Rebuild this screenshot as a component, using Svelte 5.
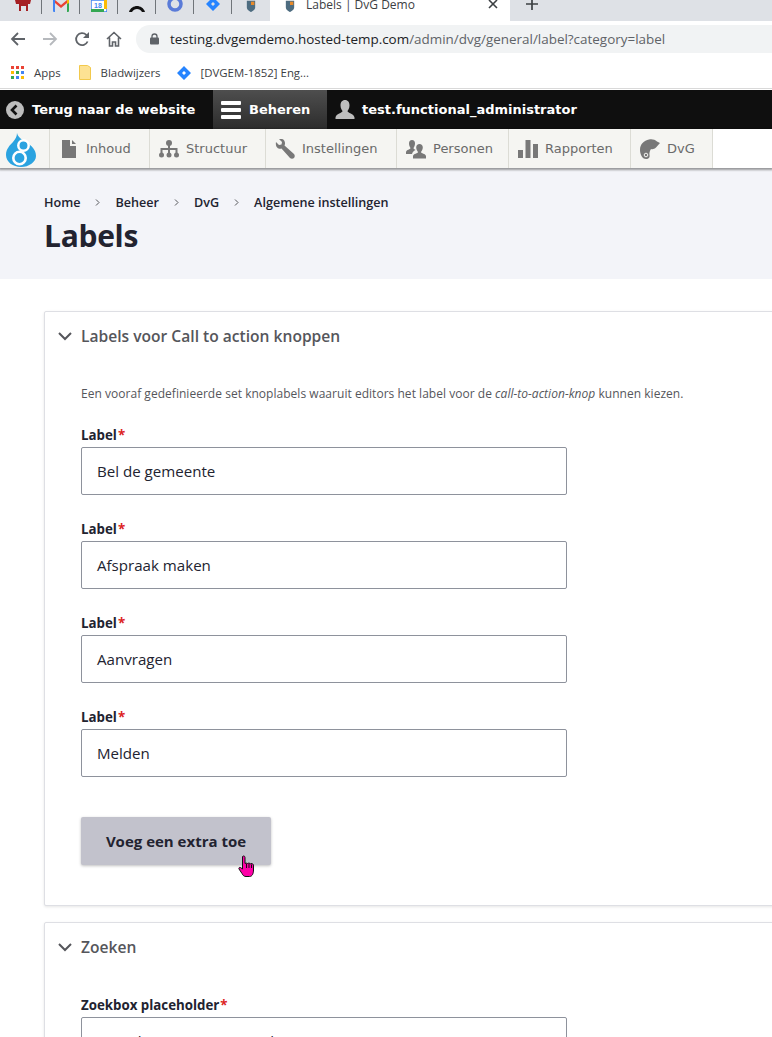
<script>
	const pinned = ['red', 'gmail', 'cal', 'arch', 'ring', 'jira', 'shield'];
	const menu = [
		{ id: 'doc', label: 'Inhoud', width: 100 },
		{ id: 'tree', label: 'Structuur', width: 116 },
		{ id: 'wrench', label: 'Instellingen', width: 131 },
		{ id: 'people', label: 'Personen', width: 112 },
		{ id: 'bars', label: 'Rapporten', width: 122 },
		{ id: 'cham', label: 'DvG', width: 82 }
	];
	const crumbs = ['Home', 'Beheer', 'DvG', 'Algemene instellingen'];
	const labels = ['Bel de gemeente', 'Afspraak maken', 'Aanvragen', 'Melden'];
</script>

{#snippet shield(size)}
	<svg width={size} height={size * 1.25} viewBox="0 0 12 15">
		<path d="M1 1h10v8c0 3-3 4-5 5.500C4 13 1 12 1 9z" fill="#4d6c80" />
		<path d="M6 2h4v4H6z" fill="#e88a2a" />
	</svg>
{/snippet}

<div class="page">
	<div class="tabstrip">
		<div class="pinned">
			{#each pinned as icon}
				<div class="pin">
					{#if icon === 'red'}
						<svg width="16" height="12" viewBox="0 0 16 12"><path d="M0 0h16l-1 4-2 0v7h-2V6H6v5H4V4L1 4z" fill="#a51e22" /></svg>
					{:else if icon === 'gmail'}
						<svg width="16" height="12" viewBox="0 0 16 12">
							<path d="M0 0h2v12H1a1 1 0 0 1-1-1z" fill="#4285f4" />
							<path d="M14 0h2v11a1 1 0 0 1-1 1h-1z" fill="#34a853" />
							<path d="M2 0l6 5 6-5v3L8 8 2 3z" fill="#ea4335" />
							<path d="M14 0h2v3l-2 1z" fill="#fbbc04" />
						</svg>
					{:else if icon === 'cal'}
						<svg width="16" height="12" viewBox="0 0 16 12">
							<rect x="0" y="0" width="16" height="12" fill="#fff" stroke="#4285f4" stroke-width="1.500" />
							<rect x="0" y="9" width="13" height="3" fill="#34a853" />
							<rect x="13" y="0" width="3" height="9" fill="#fbbc04" />
							<text x="7" y="8" class="cal-num">18</text>
						</svg>
					{:else if icon === 'arch'}
						<svg class="down" width="18" height="10" viewBox="0 0 18 10"><path d="M1 9c1-4 5-6 8-6s7 2 8 6l-3 0C13 7 11 6 9 6S5 7 4 9z" fill="#111" /></svg>
					{:else if icon === 'ring'}
						<svg width="16" height="13" viewBox="0 0 16 13"><circle cx="8" cy="4" r="6" fill="none" stroke="#5a7bd8" stroke-width="3.500" /></svg>
					{:else if icon === 'jira'}
						<svg width="16" height="12" viewBox="0 0 16 12"><path d="M8-3l7 7-7 7-7-7zM8 2L6 4l2 2 2-2z" fill="#2684ff" fill-rule="evenodd" /></svg>
					{:else}
						{@render shield(10)}
					{/if}
				</div>
			{/each}
		</div>
		<div class="tab">
			{@render shield(10)}
			<span class="tab-title">Labels | DvG Demo</span>
			<svg class="tab-close" width="10" height="10" viewBox="0 0 10 10"><path d="M1 1l8 8M9 1l-8 8" stroke="#3c4043" stroke-width="1.600" /></svg>
		</div>
		<svg class="new-tab" width="12" height="12" viewBox="0 0 12 12"><path d="M6 0v12M0 6h12" stroke="#3c4043" stroke-width="1.700" /></svg>
	</div>

	<div class="addressbar">
		<svg width="16" height="16" viewBox="0 0 16 16"><path d="M15 8H2M8 2L2 8l6 6" fill="none" stroke="#5f6368" stroke-width="1.800" /></svg>
		<svg width="16" height="16" viewBox="0 0 16 16"><path d="M1 8h13M8 2l6 6-6 6" fill="none" stroke="#b6b9bd" stroke-width="1.800" /></svg>
		<svg width="16" height="16" viewBox="0 0 16 16"><path d="M13.600 10.500A6 6 0 1 1 12.300 3.800L14.500 6" fill="none" stroke="#5f6368" stroke-width="1.800" /><path d="M15 1v6H9z" fill="#5f6368" /></svg>
		<svg width="16" height="16" viewBox="0 0 16 16"><path d="M1 8l7-6.500L15 8M3.500 6.500V15h3v-4h3v4h3V6.500" fill="none" stroke="#5f6368" stroke-width="1.600" /></svg>
		<div class="omnibox">
			<svg width="9" height="12" viewBox="0 0 9 12"><path d="M2 5V3.500a2.500 2.500 0 0 1 5 0V5" fill="none" stroke="#5f6368" stroke-width="1.300" /><rect y="4.500" width="9" height="7" rx="1" fill="#5f6368" /></svg>
			<span class="url"><b>testing.dvgemdemo.hosted-temp.com</b>/admin/dvg/general/label?category=label</span>
		</div>
	</div>

	<div class="bookmarks">
		<div class="bookmark apps">
			<svg width="13" height="13" viewBox="0 0 13 13">
				{#each [0, 5, 10] as y, row}
					{#each [0, 5, 10] as x, col}
						<rect {x} {y} width="3" height="3" fill={[['#ea4335', '#ea4335', '#ea4335'], ['#fbbc04', '#34a853', '#4285f4'], ['#34a853', '#4285f4', '#fbbc04']][row][col]} />
					{/each}
				{/each}
			</svg>
			<span>Apps</span>
		</div>
		<div class="bookmark folder">
			<svg width="12" height="15" viewBox="0 0 12 15"><path d="M.5.500h8l3 2v12H.500z" fill="#fde293" stroke="#f2c94c" /></svg>
			<span>Bladwijzers</span>
		</div>
		<div class="bookmark jira">
			<svg width="14" height="14" viewBox="0 0 14 14"><path d="M7 0l7 7-7 7-7-7zM7 5L5 7l2 2 2-2z" fill="#2684ff" fill-rule="evenodd" /></svg>
			<span>[DVGEM-1852] Eng...</span>
		</div>
	</div>

	<div class="toolbar">
		<div class="bar-item back">
			<svg width="18" height="18" viewBox="0 0 18 18"><circle cx="9" cy="9" r="9" fill="#bdbdbd" /><path d="M10.500 4.500L6 9l4.500 4.500" fill="none" stroke="#111" stroke-width="2.600" /></svg>
			<span>Terug naar de website</span>
		</div>
		<div class="bar-item manage">
			<svg width="20" height="18" viewBox="0 0 20 18"><g fill="#fff"><rect width="20" height="4" rx="1" /><rect y="7" width="20" height="4" rx="1" /><rect y="14" width="20" height="4" rx="1" /></g></svg>
			<span>Beheren</span>
		</div>
		<div class="bar-item user">
			<svg width="20" height="20" viewBox="0 0 20 20"><path d="M10 0c3 0 4.500 2.300 4.500 5.500S13 10 12.500 11c0 2 6.500 2.500 7 6.500V19H.5v-1.500C1 13.500 7.500 13 7.500 11 7 10 5.500 8.700 5.500 5.500S7 0 10 0z" fill="#bdbdbd" /></svg>
			<span>test.functional_administrator</span>
		</div>
	</div>

	<div class="tray">
		<div class="logo">
			<svg width="30" height="34" viewBox="0 0 30 34">
				<path d="M11 0c1 4 4 6 9 9 6 4 10 8 10 14 0 6-7 11-15 11S0 29 0 22c0-6 4-10 7-13 2-3 4-5 4-9z" fill="#2ba3e0" />
				<circle cx="17.500" cy="12.500" r="5.200" fill="none" stroke="#fff" stroke-width="2.500" />
				<circle cx="13.500" cy="25" r="6.200" fill="#2ba3e0" stroke="#fff" stroke-width="2.600" />
			</svg>
		</div>
		{#each menu as item}
			<div class="tray-item" style="width: {item.width}px">
				<div class="slot">
					{#if item.id === 'doc'}
						<svg width="14" height="18" viewBox="0 0 14 18"><path d="M0 0h8v6h6v12H0zM10 0l4 4h-4z" fill="#787878" /></svg>
					{:else if item.id === 'tree'}
						<svg width="20" height="18" viewBox="0 0 20 18"><g fill="#787878"><circle cx="10" cy="3" r="3" /><circle cx="2.500" cy="15" r="2.500" /><circle cx="10" cy="15" r="2.500" /><circle cx="17.500" cy="15" r="2.500" /></g><path d="M10 3v12M2.500 15V9h15v6" fill="none" stroke="#787878" stroke-width="2" /></svg>
					{:else if item.id === 'wrench'}
						<svg width="20" height="20" viewBox="0 0 20 20"><path d="M1 3l3 3 2.500-.5L7 3 4 0c3-1 6 1 6 4 0 1 0 1.500-.5 2.500L19 15c1 1 1 3 0 4s-3 1-4 0L6.500 9.500C4 10.500 0 8.500 1 3z" fill="#787878" /></svg>
					{:else if item.id === 'people'}
						<svg width="20" height="20" viewBox="0 0 20 20"><g fill="#787878"><path d="M6 1c2 0 3 1.500 3 3.500S8 8 7.500 9c0 1 1.500 1.500 2 2-2 1-3 2-3.500 4H0v-2c.5-2.500 4.500-2.500 4.500-4C4 8 3 6.500 3 4.500S4 1 6 1z" /><path d="M13.500 5c2 0 3.300 1.500 3.300 3.500s-1.300 3.500-1.800 4.500c0 1.500 4.500 1.500 5 4v2.500H7V17c.5-2.500 5-2.500 5-4-.5-1-1.800-2.500-1.800-4.500S11.500 5 13.500 5z" /></g></svg>
					{:else if item.id === 'bars'}
						<svg width="20" height="18" viewBox="0 0 20 18"><g fill="#787878"><rect y="10" width="5" height="8" /><rect x="7.500" width="5" height="18" /><rect x="15" y="4" width="5" height="14" /></g></svg>
					{:else}
						<svg width="20" height="20" viewBox="0 0 20 20"><path d="M20 4l-3-1.500C15 .5 12 0 9 .5 4 1.500 0 5 0 11c0 4 2 9 6 9 3 0 4-2 3.500-4-.3-2 .2-4 1.500-6 1.500.5 3.500 0 5-1.500z" fill="#787878" /><circle cx="6" cy="16" r="1.800" fill="none" stroke="#f5f5f2" stroke-width="1" /></svg>
					{/if}
				</div>
				<span>{item.label}</span>
			</div>
		{/each}
	</div>

	<header class="page-head">
		<nav class="crumbs">
			{#each crumbs as crumb, i}
				{#if i > 0}
					<svg width="5" height="7" viewBox="0 0 5 7"><path d="M1 .5l3 3-3 3" fill="none" stroke="#55565b" stroke-width="1" /></svg>
				{/if}
				<span>{crumb}</span>
			{/each}
		</nav>
		<h1>Labels</h1>
	</header>

	<main class="content">
		<section class="card first">
			<h2>
				<svg width="14" height="9" viewBox="0 0 14 9"><path d="M1 1l6 6 6-6" fill="none" stroke="#55565b" stroke-width="2" /></svg>
				Labels voor Call to action knoppen
			</h2>
			<div class="card-body">
				<p class="hint">Een vooraf gedefinieerde set knoplabels waaruit editors het label voor de <em>call-to-action-knop</em> kunnen kiezen.</p>
				{#each labels as value}
					<div class="field">
						<span class="field-label">Label<i>*</i></span>
						<div class="input">{value}</div>
					</div>
				{/each}
				<div class="button-wrap">
					<button type="button">Voeg een extra toe</button>
					<svg class="cursor" width="17" height="23" viewBox="0 0 17 23">
						<path d="M4.500 1.500c1-1 2.500-.5 2.500 1v6l1-.5 1.500.5 1.500-.5 1.500.8 1.500-.3c1 .5 1.500 1 1.500 2.500v4c0 3-1 6.500-4 6.500H8c-2 0-3-1-4-3L1 14c-.5-1 .5-2 1.500-1.500L4.500 14z" fill="#ff00a8" stroke="#111" stroke-width="1" />
						<path d="M8.500 9v4M11 9v4M13.500 9.500V13" stroke="#111" stroke-width="1" />
					</svg>
				</div>
			</div>
		</section>

		<section class="card second">
			<h2>
				<svg width="14" height="9" viewBox="0 0 14 9"><path d="M1 1l6 6 6-6" fill="none" stroke="#55565b" stroke-width="2" /></svg>
				Zoeken
			</h2>
			<div class="card-body">
				<div class="field">
					<span class="field-label">Zoekbox placeholder<i>*</i></span>
					<div class="input">Waar bent u naar op zoek?</div>
				</div>
			</div>
		</section>
	</main>
</div>

<style>
	:global(body) {
		margin: 0;
		background: #fff;
	}

	.page {
		width: 772px;
		height: 1037px;
		overflow: hidden;
		font-family: "Open Sans", "Noto Sans", sans-serif;
		color: #222330;
	}

	.tabstrip {
		display: flex;
		align-items: flex-start;
		height: 21px;
		background: #dee1e6;
	}

	.pinned {
		display: flex;
		width: 270px;
		padding-left: 4px;
		box-sizing: border-box;
	}

	.pin {
		display: flex;
		justify-content: center;
		width: 38px;
		height: 14px;
		overflow: hidden;
		border-right: 1px solid #70757a;
		box-sizing: border-box;
	}

	.pin:last-child {
		border-right: 0;
	}

	.pin .down {
		margin-top: 3px;
	}

	.cal-num {
		font-size: 7px;
		font-weight: 700;
		fill: #4285f4;
		text-anchor: middle;
		font-family: "Liberation Sans", sans-serif;
	}

	.tab {
		display: flex;
		align-items: flex-start;
		width: 240px;
		height: 21px;
		padding: 0 12px 0 15px;
		box-sizing: border-box;
		background: #fff;
		overflow: hidden;
	}

	.tab-title {
		margin: -5px 0 0 11px;
		font-size: 12px;
		line-height: 20px;
		color: #3c4043;
	}

	.tab-close {
		margin-left: auto;
		margin-top: -1px;
	}

	.new-tab {
		margin-left: 16px;
		margin-top: -2px;
	}

	.addressbar {
		display: flex;
		align-items: center;
		gap: 16px;
		height: 36px;
		padding: 0 0 0 10px;
		background: #fff;
	}

	.omnibox {
		display: flex;
		align-items: center;
		flex: 1;
		gap: 12px;
		height: 28px;
		margin-left: -2px;
		padding-left: 14px;
		border-radius: 14px 0 0 14px;
		background: #f1f3f4;
	}

	.url {
		font-size: 13.450px;
		color: #5f6368;
		white-space: nowrap;
		margin-left: -1px;
	}

	.url b {
		font-weight: 400;
		color: #202124;
	}

	.bookmarks {
		display: flex;
		align-items: center;
		height: 32px;
		box-sizing: border-box;
		border-bottom: 1px solid #d9d9d9;
		font-size: 11.400px;
		color: #3c4043;
		background: #fff;
	}

	.bookmark {
		display: flex;
		align-items: center;
		margin-left: 11px;
	}

	.apps span {
		margin-left: 10px;
	}

	.folder {
		margin-left: 18px;
	}

	.folder span {
		margin-left: 10px;
	}

	.jira {
		margin-left: 16px;
	}

	.jira span {
		margin-left: 10px;
	}

	.toolbar {
		display: flex;
		height: 39px;
		margin-top: 1px;
		background: #0f0f0f;
		font-family: "DejaVu Sans", Verdana, sans-serif;
		font-size: 13px;
		font-weight: 700;
		color: #fff;
	}

	.bar-item {
		display: flex;
		align-items: center;
	}

	.back {
		width: 213px;
		padding-left: 6px;
		gap: 8px;
		box-sizing: border-box;
	}

	.manage {
		width: 114px;
		padding-left: 8px;
		gap: 8px;
		box-sizing: border-box;
		background: linear-gradient(#4e4e4e, #2c2c2c);
	}

	.user {
		padding-left: 8px;
		gap: 7px;
	}

	.tray {
		display: flex;
		height: 39px;
		background: #fff;
		box-shadow: 0 1px 2px 1px rgba(0, 0, 0, 0.38);
		position: relative;
		font-family: "DejaVu Sans", Verdana, sans-serif;
		font-size: 13px;
		color: #6a6a6a;
	}

	.logo {
		display: flex;
		align-items: center;
		justify-content: center;
		width: 50px;
		padding: 3px 8px 0 0;
		box-sizing: border-box;
		background: #f5f5f2;
		border-right: 1px solid #dcdcd5;
	}

	.tray-item {
		display: flex;
		align-items: center;
		gap: 7px;
		padding-left: 9px;
		box-sizing: border-box;
		background: #f5f5f2;
		border-right: 1px solid #dcdcd5;
		white-space: nowrap;
	}

	.slot {
		display: flex;
		justify-content: center;
		width: 20px;
	}

	.page-head {
		height: 111px;
		padding: 25px 44px 0;
		box-sizing: border-box;
		background: #f3f4f9;
	}

	.crumbs {
		display: flex;
		align-items: center;
		gap: 15px;
		height: 18px;
		font-size: 12.600px;
		font-weight: 600;
		color: #222330;
	}

	h1 {
		margin: 4px 0 0;
		font-size: 30px;
		line-height: 42px;
		font-weight: 700;
		letter-spacing: -0.3px;
		color: #222330;
	}

	.content {
		width: 860px;
		padding: 32px 0 0 44px;
	}

	.card {
		border: 1px solid #dedfe4;
		border-radius: 2px;
		box-shadow: 0 1px 3px rgba(0, 0, 0, 0.1);
		background: #fff;
	}

	.first {
		height: 595px;
		box-sizing: border-box;
	}

	.second {
		margin-top: 16px;
	}

	h2 {
		display: flex;
		align-items: center;
		gap: 9px;
		margin: 0;
		height: 48px;
		padding-left: 13px;
		font-size: 15.600px;
		font-weight: 600;
		color: #55565b;
	}

	.card-body {
		padding: 0 0 0 36px;
	}

	.hint {
		margin: 25px 0 0;
		font-size: 12px;
		line-height: 18px;
		letter-spacing: 0.03px;
		color: #55565b;
	}

	.first .field {
		margin-top: 25px;
	}

	.first .hint + .field {
		margin-top: 23px;
	}

	.second .field {
		margin-top: 25px;
	}

	.field-label {
		display: block;
		height: 18px;
		margin-bottom: 3px;
		font-size: 13.300px;
		line-height: 18px;
		font-weight: 700;
		color: #222330;
	}

	.field-label i {
		margin-left: 1px;
		font-style: normal;
		color: #dc2323;
	}

	.input {
		display: flex;
		align-items: center;
		width: 486px;
		height: 48px;
		padding-left: 15px;
		box-sizing: border-box;
		border: 1px solid #8e929c;
		border-radius: 2px;
		font-size: 15.100px;
		color: #222330;
		background: #fff;
	}

	.button-wrap {
		position: relative;
		width: 190px;
		margin-top: 40px;
	}

	button {
		display: block;
		width: 190px;
		height: 48px;
		padding: 0;
		border: 0;
		border-radius: 2px;
		background: #c2c2cc;
		box-shadow: 0 1px 3px rgba(0, 0, 0, 0.25);
		font: 700 15px "Open Sans", "Noto Sans", sans-serif;
		color: #222330;
	}

	.cursor {
		position: absolute;
		left: 157px;
		top: 38px;
	}
</style>
